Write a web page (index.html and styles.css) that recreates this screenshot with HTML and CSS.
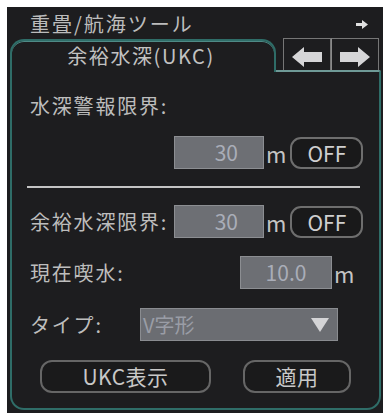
FILE: index.html
```html
<!DOCTYPE html>
<html lang="ja">
<head>
<meta charset="utf-8">
<link rel="stylesheet" href="styles.css">
</head>
<body>
<div class="window">
  <div class="header">
    <span class="title">重畳/航海ツール</span>
    <svg class="hdr-arrow" width="12" height="9" viewBox="0 0 12 9"><polygon points="0,3 6,3 6,0 12,4.5 6,9 6,6 0,6" fill="#e0e0e0"/></svg>
  </div>
  <div class="tabrow">
    <div class="tab">余裕水深(UKC)</div>
    <div class="tabrest">
      <div class="arrows">
        <div class="abtn"><svg width="30" height="20" viewBox="0 0 30 20"><polygon points="0,10 12,0 12,5 30,5 30,15 12,15 12,20" fill="#d6d6d8"/></svg></div>
        <div class="abtn"><svg width="30" height="20" viewBox="0 0 30 20"><polygon points="30,10 18,0 18,5 0,5 0,15 18,15 18,20" fill="#d6d6d8"/></svg></div>
      </div>
      <div class="tabedge"></div>
    </div>
  </div>
  <div class="panel">
    <div class="label solo">水深警報限界:</div>
    <div class="row r1">
      <div class="spacer"></div>
      <div class="field w90">30</div>
      <span class="unit">m</span>
      <div class="off">OFF</div>
    </div>
    <div class="sep"></div>
    <div class="row r2">
      <div class="label l144">余裕水深限界:</div>
      <div class="field w90">30</div>
      <span class="unit">m</span>
      <div class="off">OFF</div>
    </div>
    <div class="row r3">
      <div class="label l210">現在喫水:</div>
      <div class="field w92 center">10.0</div>
      <span class="unit">m</span>
    </div>
    <div class="row r4">
      <div class="label l110">タイプ:</div>
      <div class="select">
        <span class="seltext">V字形</span>
        <svg width="18" height="14" viewBox="0 0 18 14"><polygon points="0,0 18,0 9,14" fill="#d4d4d6"/></svg>
      </div>
    </div>
    <div class="row r5">
      <div class="btn ukc">UKC表示</div>
      <div class="btn apply">適用</div>
    </div>
  </div>
</div>
</body>
</html>
```
FILE: styles.css
```css
html, body {
  margin: 0;
  padding: 0;
  background: #ffffff;
}
body {
  font-family: "Noto Sans CJK JP", "Noto Sans", sans-serif;
  color: #bdbdbd;
}
.window {
  margin: 7px 0 0 7px;
  width: 376px;
  height: 406px;
  background: #1d1d1f;
  box-sizing: border-box;
  padding-top: 2px;
}
.header {
  height: 29px;
  display: flex;
  align-items: center;
  justify-content: space-between;
  padding: 0 15px 0 23px;
}
.title {
  font-size: 20px;
  letter-spacing: 2px;
  line-height: 24px;
  color: #bcbcbc;
}
.hdr-arrow {
  margin-top: 2px;
}
.tabrow {
  display: flex;
  height: 34px;
  margin: 0 2px 0 3px;
}
.tab {
  width: 266px;
  box-sizing: border-box;
  margin-top: 1px;
  border: 2px solid #2f6d68;
  border-bottom: none;
  border-radius: 14px 14px 0 0;
  box-shadow: inset 0 1px 0 #4f8a86;
  text-align: center;
  font-size: 20px;
  letter-spacing: 1.6px;
  line-height: 30px;
  color: #c2c2c2;
  padding-right: 4px;
}
.tabrest {
  flex: 1;
  display: flex;
  flex-direction: column;
}
.arrows {
  display: flex;
  padding-left: 7px;
  height: 32px;
}
.abtn {
  width: 48px;
  box-sizing: border-box;
  border: 1px solid #767676;
  border-bottom: none;
  display: flex;
  align-items: center;
  justify-content: center;
  padding-top: 4px;
}
.abtn + .abtn {
  border-left: 1px solid #8a8a8a;
}
.tabedge {
  flex: 1;
  border-top: 2px solid #6f9a97;
  border-right: 2px solid #2f6d68;
  border-top-right-radius: 5px;
}
.panel {
  margin: 0 2px 0 3px;
  height: 338px;
  box-sizing: border-box;
  border: 2px solid #2f6d68;
  border-top: none;
  border-radius: 0 0 14px 14px;
  padding: 22px 15px 0 18px;
}
.label {
  font-size: 20px;
  letter-spacing: 1.8px;
  line-height: 24px;
  color: #bdbdbd;
  white-space: nowrap;
}
.row {
  display: flex;
  align-items: center;
  height: 33px;
}
.r1 { margin-top: 18px; }
.r2 { margin-top: 17px; }
.r3 { margin-top: 18px; }
.r4 { margin-top: 19px; }
.r5 { margin-top: 19px; }
.spacer { width: 144px; }
.l144 { width: 144px; }
.l210 { width: 210px; }
.l110 { width: 110px; }
.field {
  height: 33px;
  box-sizing: border-box;
  background: #6d6f74;
  border: 1px solid #8c8e92;
  color: #a9adb8;
  font-size: 21px;
  line-height: 30px;
  text-align: right;
  padding-right: 25px;
}
.w90 { width: 90px; }
.w92 { width: 92px; }
.field.center {
  text-align: center;
  padding-right: 0;
}
.unit {
  font-size: 22px;
  color: #c4c4c4;
  margin-left: 2px;
  line-height: 24px;
}
.off {
  width: 73px;
  height: 32px;
  box-sizing: border-box;
  margin-left: 4px;
  border: 2px solid #6e6e6e;
  border-radius: 11px;
  background: #19191a;
  color: #cfcfcf;
  font-size: 21px;
  line-height: 28px;
  text-align: center;
}
.sep {
  margin: 17px 0 0 -3px;
  width: 333px;
  height: 2px;
  background: #c4c4c4;
}
.select {
  width: 198px;
  height: 33px;
  box-sizing: border-box;
  background: #6b6d72;
  border: 1px solid #8a8c90;
  display: flex;
  align-items: center;
  justify-content: space-between;
  padding: 0 8px 0 2px;
}
.seltext {
  font-size: 20px;
  color: #9a9da6;
  line-height: 28px;
}
.btn {
  height: 33px;
  box-sizing: border-box;
  border: 2px solid #666;
  border-radius: 12px;
  background: #1a1a1b;
  color: #c8c8c8;
  font-size: 21px;
  line-height: 29px;
  text-align: center;
  letter-spacing: 0.5px;
}
.ukc {
  width: 171px;
  margin-left: 10px;
}
.apply {
  width: 108px;
  margin-left: 32px;
}
```
